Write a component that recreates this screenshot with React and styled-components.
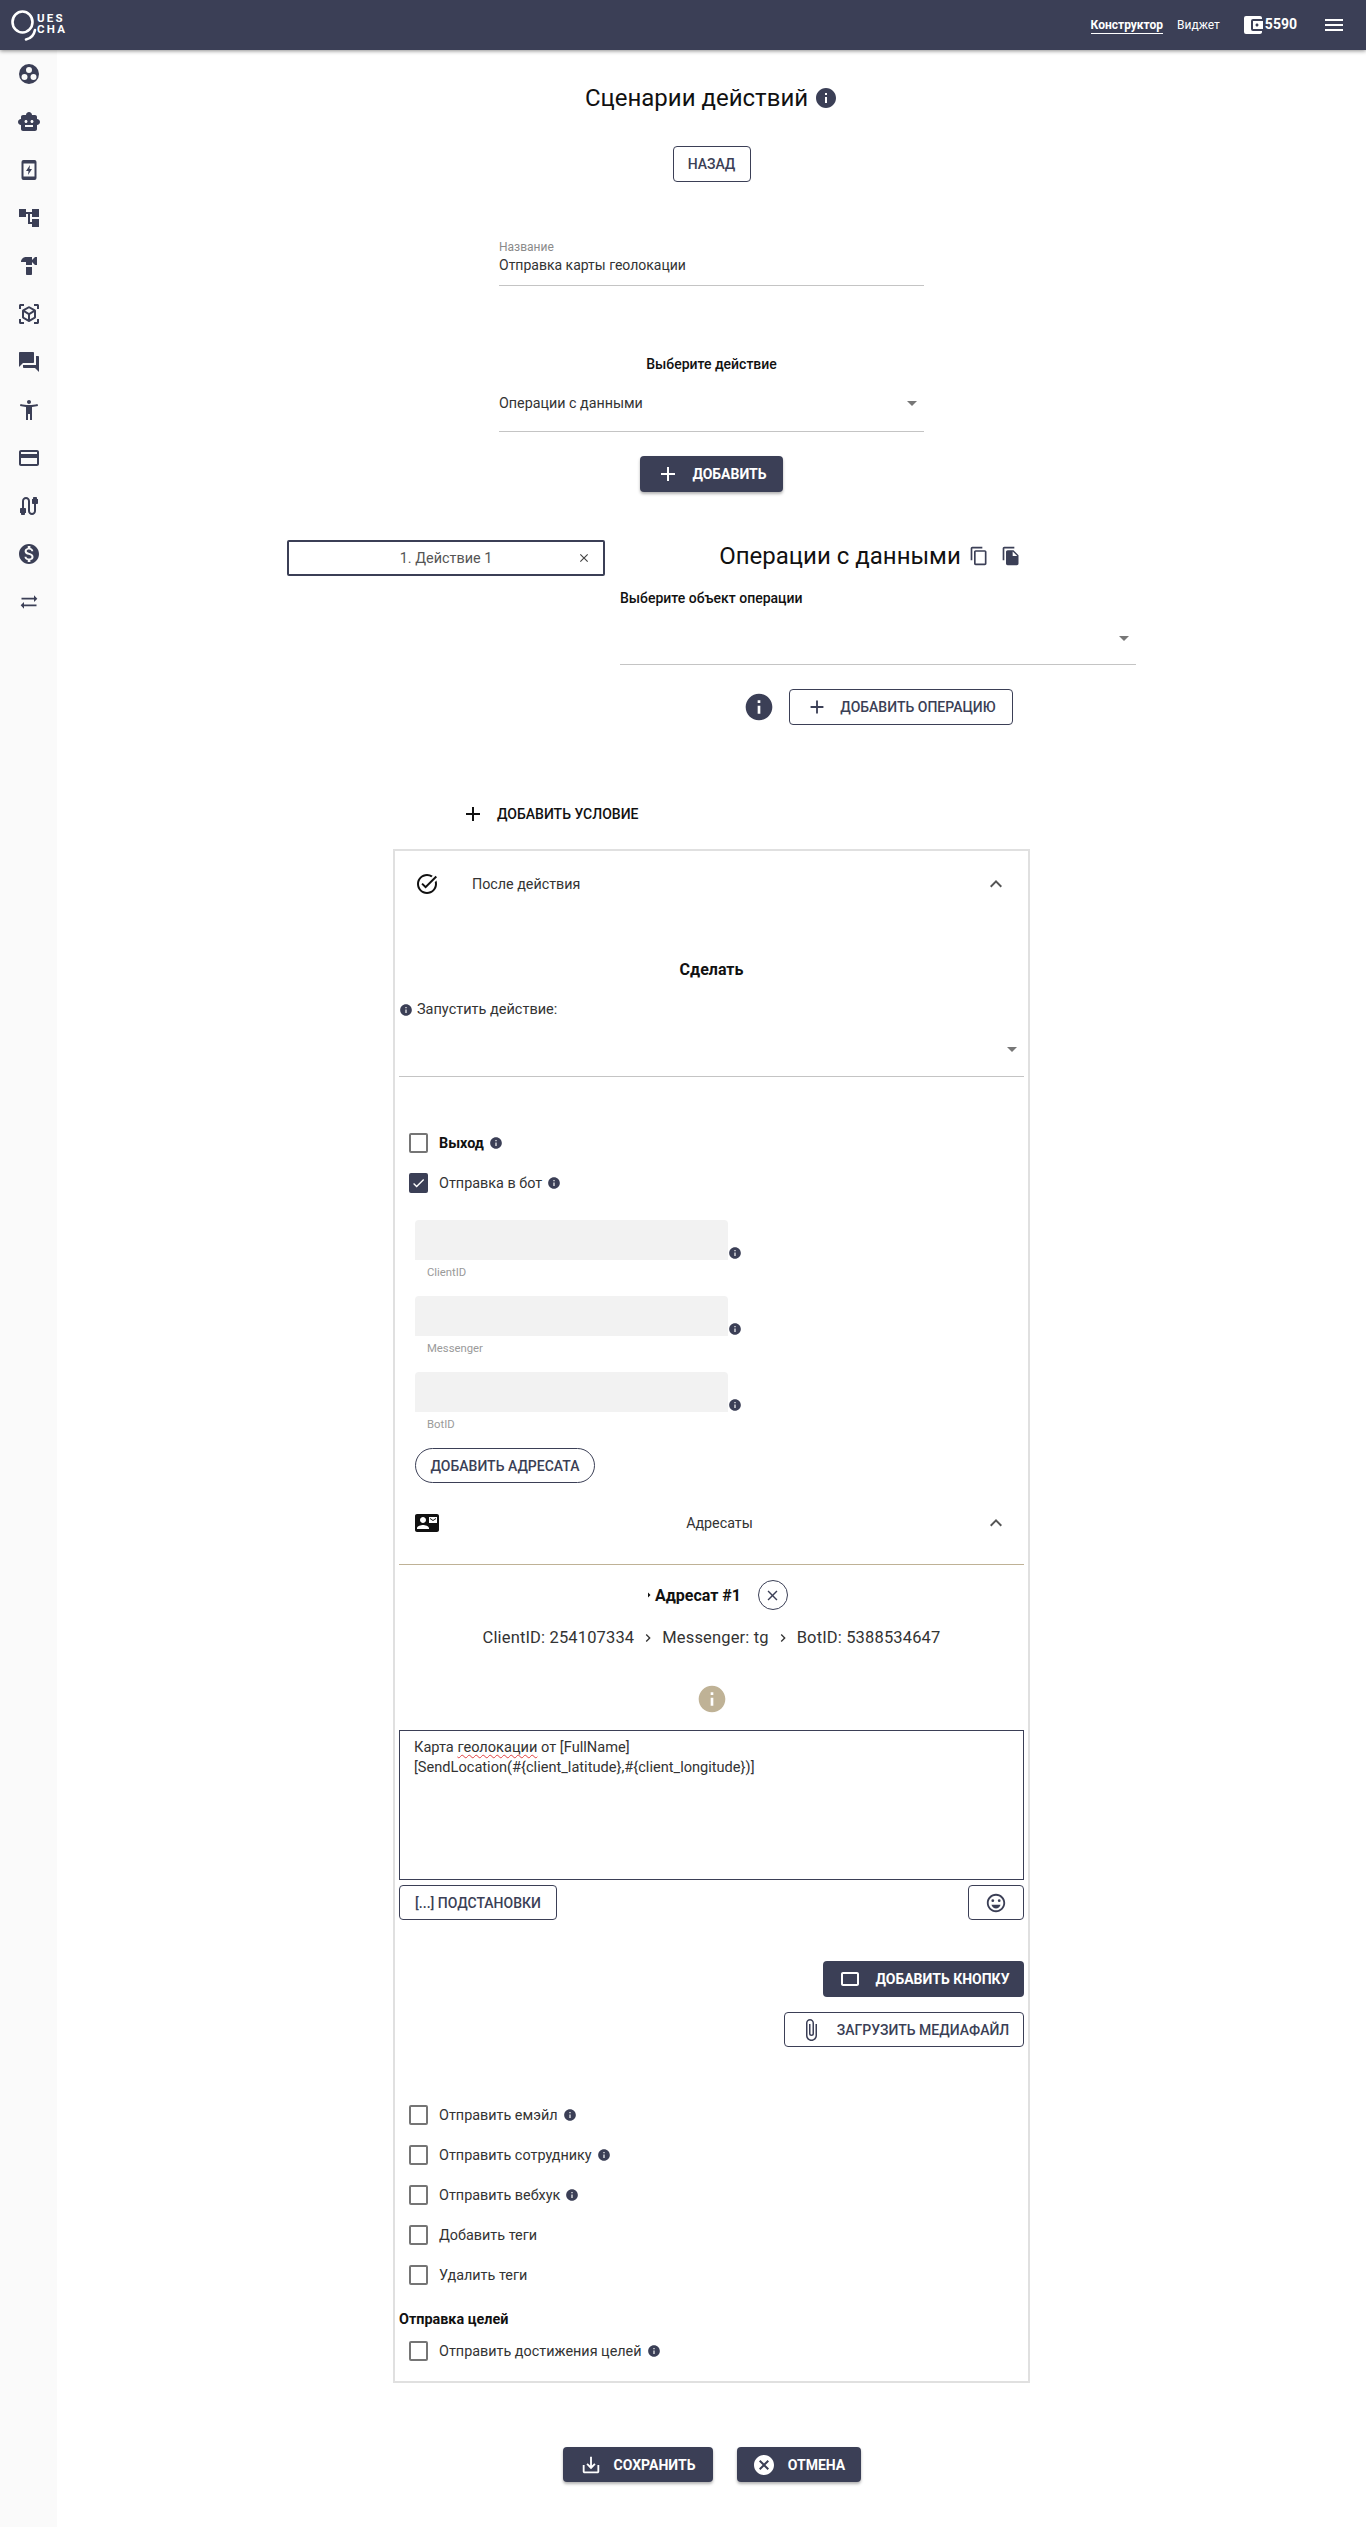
import React from 'react';
import styled, { createGlobalStyle } from 'styled-components';
import {
  MdSmartToy, MdAccountTree, MdHardware, MdViewInAr, MdQuestionAnswer, MdAccessibilityNew,
  MdCreditCard, MdCable, MdMonetizationOn, MdSyncAlt, MdMenu, MdAccountBalanceWallet, MdInfo,
  MdAdd, MdContentCopy, MdFileCopy, MdClose, MdExpandLess, MdTaskAlt, MdContactMail,
  MdAttachFile, MdCrop75, MdOutlineEmojiEmotions, MdSaveAlt, MdCancel, MdArrowDropDown,
  MdArrowRight, MdChevronRight, MdCheck,
} from 'react-icons/md';

const DARK = '#3b3f56';

const GlobalStyle = createGlobalStyle`
  html, body { margin: 0; padding: 0; background: #fff; }
  body { font-family: Roboto, "Liberation Sans", sans-serif; color: #222; }
  * { box-sizing: border-box; }
`;

const Page = styled.div`
  display: flex;
  flex-direction: column;
  height: 2527px;
  overflow: hidden;
`;

const TopBar = styled.header`
  flex: none;
  height: 50px;
  background: ${DARK};
  box-shadow: 0 1px 4px rgba(0, 0, 0, 0.45);
  display: flex;
  align-items: center;
  justify-content: space-between;
  padding: 0 20px 0 10px;
  color: #fff;
  z-index: 2;
`;

const Logo = styled.div`
  display: flex;
  align-items: center;
  margin-top: 2px;
`;

const LogoText = styled.div`
  display: flex;
  flex-direction: column;
  margin: -5px 0 0 -3px;
  font-size: 11.5px;
  font-weight: 700;
  letter-spacing: 2.2px;
  line-height: 11px;
`;

const TopNav = styled.nav`
  display: flex;
  align-items: center;
`;

const NavLink = styled.span`
  font-size: 12px;
  font-weight: ${p => (p.$active ? 700 : 400)};
  margin-right: ${p => p.$gap}px;
  ${p => p.$active && 'border-bottom: 1px solid #fff; padding: 2px 0 1px;'}
`;

const Balance = styled.span`
  display: flex;
  align-items: center;
  font-size: 14px;
  font-weight: 700;
  margin-right: 25px;
  & > span { margin-top: -2px; }
`;

const Body = styled.div`
  flex: 1;
  display: flex;
`;

const SideBar = styled.aside`
  flex: none;
  width: 57px;
  background: #fafafa;
  display: flex;
  flex-direction: column;
  color: ${DARK};
`;

const SideItem = styled.div`
  height: 48px;
  display: flex;
  align-items: center;
  justify-content: center;
`;

const Main = styled.main`
  flex: 1;
  display: flex;
  flex-direction: column;
  align-items: center;
  padding-top: 34px;
`;

const Title = styled.h1`
  margin: 0;
  display: flex;
  align-items: center;
  gap: 6px;
  font-size: 24px;
  font-weight: 400;
  line-height: 28px;
  color: #111;
  & > svg { color: ${DARK}; }
`;

const OutlineButton = styled.button`
  display: flex;
  align-items: center;
  justify-content: center;
  gap: ${p => p.$gap || 0}px;
  width: ${p => p.$w}px;
  height: ${p => p.$h || 36}px;
  margin-top: ${p => p.$top || 0}px;
  background: #fff;
  border: 1px solid ${DARK};
  border-radius: ${p => p.$radius || 4}px;
  font: 500 14px Roboto, sans-serif;
  color: ${DARK};
  padding: 0;
`;

const DarkButton = styled.button`
  display: flex;
  align-items: center;
  justify-content: center;
  gap: ${p => p.$gap || 12}px;
  width: ${p => p.$w}px;
  height: ${p => p.$h || 36}px;
  margin-top: ${p => p.$top || 0}px;
  background: ${DARK};
  border: 0;
  border-radius: 4px;
  font: 700 14px Roboto, sans-serif;
  color: #fff;
  padding: 0;
  box-shadow: ${p => (p.$flat ? 'none' : '0 2px 3px rgba(0, 0, 0, 0.3)')};
`;

const NameField = styled.div`
  width: 425px;
  margin-top: 58px;
  border-bottom: 1px solid #c4c4c4;
  padding-bottom: 10px;
`;

const FloatLabel = styled.div`
  font-size: 12px;
  line-height: 14px;
  color: #8a8a8a;
`;

const FieldValue = styled.div`
  font-size: 14px;
  line-height: 20px;
  color: #333;
  margin-top: 1px;
`;

const BoldCaption = styled.div`
  font-size: 14px;
  font-weight: 500;
  line-height: 16px;
  color: #111;
  margin-top: ${p => p.$top || 0}px;
`;

const SelectBox = styled.div`
  position: relative;
  width: ${p => (p.$w ? `${p.$w}px` : '100%')};
  height: ${p => p.$h}px;
  border-bottom: 1px solid #c4c4c4;
  padding-top: ${p => p.$pad || 0}px;
  font-size: 14.3px;
  line-height: 20px;
  color: #333;
`;

const SelectArrow = styled(MdArrowDropDown)`
  position: absolute;
  right: 0;
  top: ${p => p.$y}px;
  color: #777;
`;

const ActionRow = styled.section`
  display: flex;
  gap: 15px;
  width: 849px;
  margin-top: 48px;
`;

const ActionTab = styled.div`
  flex: none;
  width: 318px;
  height: 36px;
  border: 2px solid ${DARK};
  border-radius: 2px;
  display: grid;
  grid-template-columns: 1fr auto 1fr;
  align-items: center;
  font-size: 14.4px;
  color: #555;
  padding: 0 12px;
  & > svg { justify-self: end; color: #444; }
`;

const ActionPanel = styled.div`
  flex: 1;
  display: flex;
  flex-direction: column;
`;

const PanelTitle = styled.div`
  display: flex;
  align-items: center;
  justify-content: center;
  height: 32px;
  padding-right: 16px;
  font-size: 24px;
  color: #111;
`;

const PanelIcon = styled.span`
  display: flex;
  margin-left: ${p => p.$left}px;
  color: ${DARK};
`;

const OperationRow = styled.div`
  display: flex;
  align-items: center;
  justify-content: center;
  gap: 14px;
  margin-top: 24px;
  color: ${DARK};
`;

const ConditionRow = styled.div`
  width: 637px;
  height: 36px;
  margin-top: 71px;
  padding-left: 68px;
  display: flex;
  align-items: center;
  gap: 12px;
  font-size: 14px;
  font-weight: 500;
  color: #111;
`;

const Card = styled.section`
  width: 637px;
  margin-top: 17px;
  border: 2px solid #e0e0e0;
  padding: 0 4px 10px;
`;

const AccordionHead = styled.div`
  display: flex;
  align-items: center;
  height: ${p => p.$h}px;
  margin-top: ${p => p.$top || 0}px;
  padding: 0 16px;
  font-size: 14.3px;
  color: #333;
  gap: 33px;
  & > svg:first-child { color: #111; }
`;

const HeadText = styled.span`
  flex: ${p => (p.$center ? 1 : 'none')};
  text-align: ${p => (p.$center ? 'center' : 'left')};
  padding-left: ${p => (p.$center ? 16 : 0)}px;
`;

const Chevron = styled(MdExpandLess)`
  margin-left: auto;
  color: #555;
`;

const CenterHeading = styled.div`
  margin-top: 43px;
  text-align: center;
  font-size: 16px;
  font-weight: 700;
  line-height: 20px;
  color: #111;
`;

const InfoLabel = styled.div`
  display: flex;
  align-items: center;
  gap: 4px;
  margin-top: 21px;
  font-size: 14.5px;
  line-height: 18px;
  color: #333;
  & > svg { color: ${DARK}; }
`;

const CheckRow = styled.label`
  display: flex;
  align-items: center;
  height: 40px;
  padding-left: 10px;
  margin-top: ${p => p.$top || 0}px;
  font-size: 14.4px;
  font-weight: ${p => (p.$bold ? 700 : 400)};
  color: ${p => (p.$bold ? '#111' : '#333')};
  & > svg { margin-left: 5px; color: ${DARK}; }
`;

const CheckBox = styled.span`
  flex: none;
  width: 19px;
  height: 20px;
  margin-right: 11px;
  border: 2px solid ${p => (p.$on ? DARK : '#757575')};
  border-radius: 2px;
  background: ${p => (p.$on ? DARK : '#fff')};
  display: flex;
  align-items: center;
  justify-content: center;
  color: #fff;
`;

const RecipientFields = styled.div`
  margin-top: 17px;
  padding-left: 16px;
`;

const FieldBlock = styled.div`
  height: 76px;
`;

const FieldLine = styled.div`
  display: flex;
  align-items: flex-end;
  color: ${DARK};
`;

const GrayInput = styled.div`
  width: 313px;
  height: 40px;
  background: #f2f2f2;
  border-radius: 4px 4px 0 0;
`;

const FieldCaption = styled.div`
  margin: 6px 0 0 12px;
  font-size: 11.3px;
  line-height: 14px;
  color: #9a9a9a;
`;

const Divider = styled.div`
  margin-top: 21px;
  height: 1px;
  background: #bfb296;
`;

const RecipientTitle = styled.div`
  display: flex;
  align-items: center;
  justify-content: center;
  margin-top: 15px;
  padding-left: 8px;
  font-size: 16px;
  font-weight: 700;
  color: #111;
`;

const RoundClose = styled.span`
  width: 30px;
  height: 30px;
  margin-left: 17px;
  border: 1px solid ${DARK};
  border-radius: 50%;
  display: flex;
  align-items: center;
  justify-content: center;
  color: ${DARK};
`;

const RecipientPath = styled.div`
  margin-top: 18px;
  display: flex;
  align-items: center;
  justify-content: center;
  gap: 6px;
  font-size: 16.5px;
  letter-spacing: 0.15px;
  line-height: 20px;
  color: #333;
  & > svg { color: #333; }
`;

const CenterIcon = styled.div`
  display: flex;
  justify-content: center;
  margin-top: 35px;
  color: #bfb296;
`;

const MessageBox = styled.div`
  margin-top: 15px;
  height: 150px;
  border: 1px solid ${DARK};
  padding: 6px 14px;
  font-size: 14.6px;
  line-height: 20px;
  color: #333;
`;

const Misspelled = styled.span`
  text-decoration: underline wavy #e04040 1px;
  text-underline-offset: 2px;
`;

const ToolRow = styled.div`
  display: flex;
  justify-content: space-between;
  margin-top: 5px;
`;

const RightStack = styled.div`
  display: flex;
  flex-direction: column;
  align-items: flex-end;
  margin-top: ${p => p.$top || 0}px;
`;

const OptionList = styled.div`
  margin-top: 48px;
`;

const GoalsCaption = styled.div`
  margin-top: 17px;
  font-size: 14.4px;
  font-weight: 700;
  line-height: 16px;
  color: #111;
`;

const Footer = styled.div`
  display: flex;
  gap: 24px;
  margin-top: 64px;
`;

const ThreeDots = () => (
  <svg width="24" height="24" viewBox="0 0 24 24" fill="currentColor">
    <path fillRule="evenodd" d="M12 2a10 10 0 1 0 0 20 10 10 0 0 0 0-20zm0 3a3 3 0 1 1 0 6 3 3 0 0 1 0-6zM7.5 12a3 3 0 1 1 0 6 3 3 0 0 1 0-6zm9 0a3 3 0 1 1 0 6 3 3 0 0 1 0-6z" />
  </svg>
);

const BoltTablet = () => (
  <svg width="24" height="24" viewBox="0 0 24 24" fill="currentColor">
    <path fillRule="evenodd" d="M6.5 2h11A2 2 0 0 1 19.500 4v16a2 2 0 0 1-2 2h-11a2 2 0 0 1-2-2V4a2 2 0 0 1 2-2zm0 3.500v13h11v-13z" />
    <path d="M13 7 9 13h2.500l-.5 4 4-6h-2.500z" />
  </svg>
);

const LogoMark = () => (
  <svg width="30" height="36" viewBox="0 0 30 36" fill="none" stroke="#fff" strokeWidth="2.6" strokeLinecap="round">
    <ellipse cx="12.500" cy="14" rx="10" ry="10.500" />
    <path d="M25 22c-1 5-4 8.500-9 9.500" />
  </svg>
);

const sideIcons = [
  <ThreeDots />, <MdSmartToy size={24} />, <BoltTablet />, <MdAccountTree size={24} />,
  <MdHardware size={24} />, <MdViewInAr size={24} />, <MdQuestionAnswer size={24} />,
  <MdAccessibilityNew size={24} />, <MdCreditCard size={24} />, <MdCable size={24} />,
  <MdMonetizationOn size={24} />, <MdSyncAlt size={20} />,
];

const Option = ({ label, on, bold, info, top }) => (
  <CheckRow $bold={bold} $top={top}>
    <CheckBox $on={on}>{on && <MdCheck size={18} />}</CheckBox>
    {label}
    {info && <MdInfo size={14} />}
  </CheckRow>
);

const Field = ({ label }) => (
  <FieldBlock>
    <FieldLine>
      <GrayInput />
      <MdInfo size={14} />
    </FieldLine>
    <FieldCaption>{label}</FieldCaption>
  </FieldBlock>
);

const App = () => (
  <Page>
    <GlobalStyle />
    <TopBar>
      <Logo>
        <LogoMark />
        <LogoText>
          <span>UES</span>
          <span>CHA</span>
        </LogoText>
      </Logo>
      <TopNav>
        <NavLink $active $gap={14}>Конструктор</NavLink>
        <NavLink $gap={21}>Виджет</NavLink>
        <Balance>
          <MdAccountBalanceWallet size={24} />
          <span>5590</span>
        </Balance>
        <MdMenu size={24} />
      </TopNav>
    </TopBar>

    <Body>
      <SideBar>
        {sideIcons.map((icon, i) => <SideItem key={i}>{icon}</SideItem>)}
      </SideBar>

      <Main>
        <Title>Сценарии действий <MdInfo size={24} /></Title>
        <OutlineButton $w={78} $top={34}>НАЗАД</OutlineButton>

        <NameField>
          <FloatLabel>Название</FloatLabel>
          <FieldValue>Отправка карты геолокации</FieldValue>
        </NameField>

        <BoldCaption $top={70}>Выберите действие</BoldCaption>
        <SelectBox $w={425} $h={60} $pad={21}>
          Операции с данными
          <SelectArrow size={24} $y={19} />
        </SelectBox>
        <DarkButton $w={143} $top={24}>
          <MdAdd size={24} /> ДОБАВИТЬ
        </DarkButton>

        <ActionRow>
          <ActionTab>
            <span />
            <span>1. Действие 1</span>
            <MdClose size={14} />
          </ActionTab>
          <ActionPanel>
            <PanelTitle>
              Операции с данными
              <PanelIcon $left={8}><MdContentCopy size={20} /></PanelIcon>
              <PanelIcon $left={12}><MdFileCopy size={20} /></PanelIcon>
            </PanelTitle>
            <BoldCaption $top={18}>Выберите объект операции</BoldCaption>
            <SelectBox $h={59}>
              <SelectArrow size={24} $y={20} />
            </SelectBox>
            <OperationRow>
              <MdInfo size={32} />
              <OutlineButton $w={224} $gap={12}>
                <MdAdd size={22} /> ДОБАВИТЬ ОПЕРАЦИЮ
              </OutlineButton>
            </OperationRow>
          </ActionPanel>
        </ActionRow>

        <ConditionRow>
          <MdAdd size={24} /> ДОБАВИТЬ УСЛОВИЕ
        </ConditionRow>

        <Card>
          <AccordionHead $h={66}>
            <MdTaskAlt size={24} />
            <HeadText>После действия</HeadText>
            <Chevron size={24} />
          </AccordionHead>

          <CenterHeading>Сделать</CenterHeading>
          <InfoLabel><MdInfo size={14} /> Запустить действие:</InfoLabel>
          <SelectBox $h={58}>
            <SelectArrow size={24} $y={18} />
          </SelectBox>

          <Option label="Выход" bold info top={46} />
          <Option label="Отправка в бот" on info />

          <RecipientFields>
            <Field label="ClientID" />
            <Field label="Messenger" />
            <Field label="BotID" />
            <OutlineButton $w={180} $h={35} $radius={18}>ДОБАВИТЬ АДРЕСАТА</OutlineButton>
          </RecipientFields>

          <AccordionHead $h={40} $top={20}>
            <MdContactMail size={24} />
            <HeadText $center>Адресаты</HeadText>
            <Chevron size={24} />
          </AccordionHead>
          <Divider />

          <RecipientTitle>
            <MdArrowRight size={12} /> Адресат #1
            <RoundClose><MdClose size={17} /></RoundClose>
          </RecipientTitle>
          <RecipientPath>
            ClientID: 254107334 <MdChevronRight size={16} />
            Messenger: tg <MdChevronRight size={16} />
            BotID: 5388534647
          </RecipientPath>

          <CenterIcon><MdInfo size={32} /></CenterIcon>
          <MessageBox>
            Карта <Misspelled>геолокации</Misspelled> от [FullName]
            <br />
            [SendLocation(#{'{'}client_latitude{'}'},#{'{'}client_longitude{'}'})]
          </MessageBox>

          <ToolRow>
            <OutlineButton $w={158} $h={35}>[...] ПОДСТАНОВКИ</OutlineButton>
            <OutlineButton $w={56} $h={35}><MdOutlineEmojiEmotions size={22} /></OutlineButton>
          </ToolRow>

          <RightStack $top={41}>
            <DarkButton $w={201} $flat $gap={14}>
              <MdCrop75 size={24} /> ДОБАВИТЬ КНОПКУ
            </DarkButton>
            <OutlineButton $w={240} $h={35} $top={15} $gap={14}>
              <MdAttachFile size={24} /> ЗАГРУЗИТЬ МЕДИАФАЙЛ
            </OutlineButton>
          </RightStack>

          <OptionList>
            <Option label="Отправить емэйл" info />
            <Option label="Отправить сотруднику" info />
            <Option label="Отправить вебхук" info />
            <Option label="Добавить теги" />
            <Option label="Удалить теги" />
          </OptionList>

          <GoalsCaption>Отправка целей</GoalsCaption>
          <Option label="Отправить достижения целей" info top={3} />
        </Card>

        <Footer>
          <DarkButton $w={150} $h={35}>
            <MdSaveAlt size={22} /> СОХРАНИТЬ
          </DarkButton>
          <DarkButton $w={124} $h={35}>
            <MdCancel size={24} /> ОТМЕНА
          </DarkButton>
        </Footer>
      </Main>
    </Body>
  </Page>
);

export default App;
